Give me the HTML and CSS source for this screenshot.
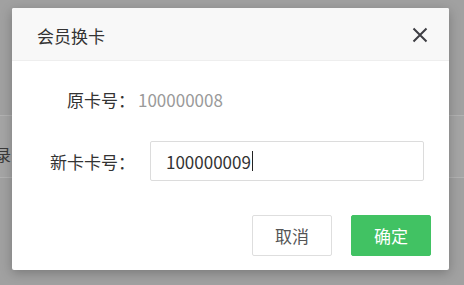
FILE: index.html
```html
<!DOCTYPE html>
<html lang="zh-CN">
<head>
<meta charset="utf-8">
<title>会员换卡</title>
<link rel="stylesheet" href="styles.css">
</head>
<body>
<div class="page">
  <div class="page-row"><span class="page-cell">记录</span></div>
</div>
<div class="dialog">
  <div class="dialog-head">
    <span class="dialog-title">会员换卡</span>
    <svg class="close" width="16" height="16" viewBox="0 0 16 16"><path d="M1.5 1.5L14.5 14.5M14.5 1.5L1.5 14.5" stroke="#3e3e44" stroke-width="2" fill="none"/></svg>
  </div>
  <div class="dialog-body">
    <div class="form-row">
      <span class="label">原卡号：</span>
      <span class="value">100000008</span>
    </div>
    <div class="form-row input-row">
      <span class="label">新卡卡号：</span>
      <div class="input"><span>100000009</span><span class="caret"></span></div>
    </div>
  </div>
  <div class="dialog-foot">
    <button class="btn btn-cancel">取消</button>
    <button class="btn btn-ok">确定</button>
  </div>
</div>
</body>
</html>
```
FILE: styles.css
```css
html, body {
  margin: 0;
  padding: 0;
}
body {
  width: 464px;
  height: 285px;
  background: #a1a1a1;
  font-family: "Noto Sans CJK SC", "Noto Sans", sans-serif;
  position: relative;
  overflow: hidden;
}
.page {
  padding-top: 115px;
}
.page-row {
  height: 63px;
  border-top: 1px solid #b2b2b2;
  border-bottom: 1px solid #b2b2b2;
  background: #a5a5a5;
  margin-left: -21px;
  padding-top: 28px;
  box-sizing: border-box;
  font-size: 16px;
  line-height: 20px;
  color: #3a3a3a;
}
.dialog {
  position: absolute;
  left: 12px;
  top: 8px;
  width: 437px;
  height: 262px;
  background: #fff;
  border-radius: 2px;
  box-shadow: 0 3px 12px rgba(0, 0, 0, 0.25);
  display: flex;
  flex-direction: column;
}
.dialog-head {
  height: 53px;
  background: #f8f8f8;
  border-bottom: 1px solid #eeeeee;
  border-radius: 2px 2px 0 0;
  display: flex;
  align-items: center;
  justify-content: space-between;
  padding: 2px 21px 0 25px;
  box-sizing: border-box;
}
.dialog-title {
  font-size: 17px;
  color: #333;
}
.close {
  display: block;
}
.dialog-body {
  padding: 20px 25px 0 38px;
}
.form-row {
  display: flex;
  align-items: center;
  height: 36px;
  font-size: 17px;
}
.label {
  width: 85px;
  text-align: right;
  color: #333;
  flex: none;
}
.value {
  margin-left: 3px;
  color: #9a9a9a;
}
.input-row {
  margin-top: 24px;
  height: 40px;
}
.input {
  margin-left: 15px;
  flex: 1;
  height: 40px;
  box-sizing: border-box;
  border: 1px solid #dcdcdc;
  border-radius: 2px;
  padding-left: 15px;
  display: flex;
  align-items: center;
  color: #333;
}
.caret {
  width: 1px;
  height: 20px;
  background: #222;
  margin-left: 1px;
}
.dialog-foot {
  margin-top: auto;
  display: flex;
  justify-content: flex-end;
  gap: 19px;
  padding: 0 18px 14px 0;
}
.btn {
  width: 80px;
  height: 41px;
  border-radius: 2px;
  font-family: inherit;
  font-size: 17px;
  padding: 0;
  cursor: pointer;
}
.btn-cancel {
  background: #fff;
  border: 1px solid #dedede;
  color: #555;
}
.btn-ok {
  background: #41c263;
  border: 1px solid #41c263;
  color: #fff;
}
```
